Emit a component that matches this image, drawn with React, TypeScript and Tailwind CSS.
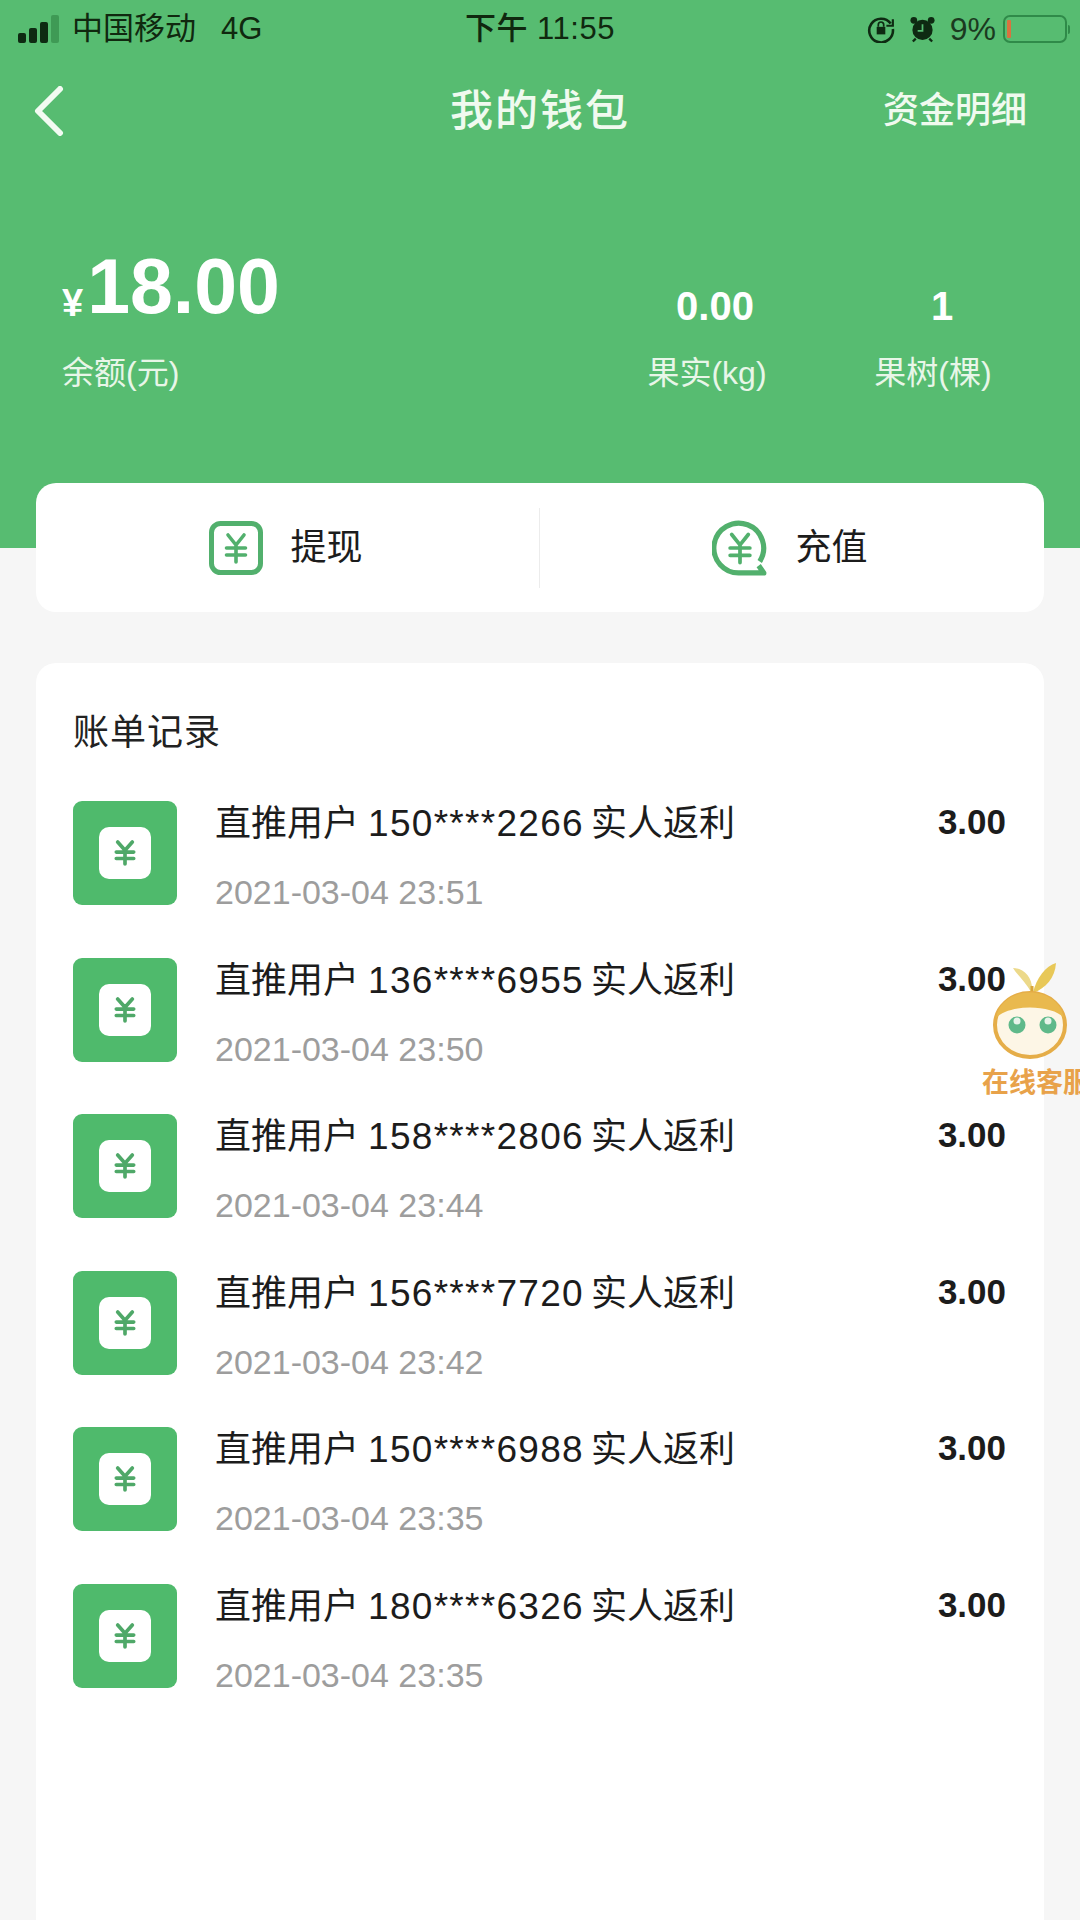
import React from "react";

const font = { fontFamily: '"Liberation Sans","Noto Sans CJK SC",sans-serif' };

function Yen({ className, sw = 4 }: { className?: string; sw?: number }) {
  return (
    <svg viewBox="0 0 24 30" className={className} fill="none" stroke="currentColor" strokeWidth={sw} strokeLinecap="round" strokeLinejoin="round">
      <path d="M4 3 L12 12 L20 3 M12 12 V27 M2.5 14 H21.5 M2.5 21 H21.5" />
    </svg>
  );
}

const rows = [
  ["150****2266", "2021-03-04 23:51"],
  ["136****6955", "2021-03-04 23:50"],
  ["158****2806", "2021-03-04 23:44"],
  ["156****7720", "2021-03-04 23:42"],
  ["150****6988", "2021-03-04 23:35"],
  ["180****6326", "2021-03-04 23:35"],
];

function Row({ phone, date }: { phone: string; date: string }) {
  return (
    <div className="flex h-[156.6px] items-start">
      <div className="flex h-[104px] w-[104px] shrink-0 items-center justify-center rounded-[9px] bg-[#4fba6c]">
        <div className="flex h-[52px] w-[52px] items-center justify-center rounded-[10px] bg-white">
          <Yen className="h-[28px] w-[22px] text-[#4fa868]" />
        </div>
      </div>
      <div className="ml-[38px] flex-1">
        <div className="whitespace-nowrap text-[36px] leading-[46px] text-[#1c1c1c]">
          直推用户 <span className="-ml-[1px] -mr-[3px] text-[37px] tracking-[1.3px]">{phone}</span> 实人返利
        </div>
        <div className="mt-[24px] whitespace-nowrap text-[34px] leading-[42px] text-[#9d9d9d]">{date}</div>
      </div>
      <div className="mr-[38px] text-[35px] font-bold leading-[42px] text-[#1c1c1c]">3.00</div>
    </div>
  );
}

function Mascot() {
  return (
    <div className="absolute left-[980px] top-[960px] w-[100px] overflow-hidden">
      <svg viewBox="0 0 100 100" className="block h-[100px] w-[100px]">
        <path d="M52 34 C46 22 38 16 33 8 C44 8 54 18 52 34Z" fill="#ecd98a" />
        <path d="M53 33 C56 18 66 6 76 3 C75 18 66 28 53 33Z" fill="#e8c858" />
        <path d="M52 26 V36" stroke="#d9a63a" strokeWidth="3" />
        <ellipse cx="50" cy="65" rx="35" ry="32" fill="#fdf6e6" stroke="#e5ad48" strokeWidth="4" />
        <path d="M16 58 C22 24 78 24 84 58 C72 44 28 44 16 58Z" fill="#e9b94e" />
        <circle cx="37" cy="65" r="8.5" fill="#5fb98a" />
        <circle cx="68" cy="65" r="8.5" fill="#5fb98a" />
        <circle cx="37" cy="61" r="3.5" fill="#e8f3ea" />
        <circle cx="68" cy="61" r="3.5" fill="#e8f3ea" />
      </svg>
      <div className="ml-[2px] mt-[7px] whitespace-nowrap text-[27px] font-bold leading-[32px] text-[#e8a24a]">在线客服</div>
    </div>
  );
}

export default function App() {
  return (
    <div className="relative h-[1920px] w-[1080px] overflow-hidden bg-[#f6f6f6]" style={font}>
      <header className="h-[548px] bg-[#57bc71] text-white">
        <div className="relative flex h-[56px] items-center pl-[18px] pr-[10px] pt-[2px] text-[#10280f]">
          <div className="flex h-[28px] items-end gap-[3px]">
            <span className="h-[10px] w-[8px] rounded-[2px] bg-[#0e2a12]" />
            <span className="h-[15px] w-[8px] rounded-[2px] bg-[#0e2a12]" />
            <span className="h-[21px] w-[8px] rounded-[2px] bg-[#0e2a12]" />
            <span className="h-[28px] w-[8px] rounded-[2px] bg-[#3f9a55]" />
          </div>
          <span className="ml-[13px] text-[31px]">中国移动</span>
          <span className="ml-[25px] text-[31px]">4G</span>
          <span className="absolute left-[465px] text-[31px] font-medium tracking-[0.5px]">下午 11:55</span>
          <div className="ml-auto flex items-center">
            <svg viewBox="0 0 26 26" className="mr-[14px] h-[28px] w-[28px]" fill="none" stroke="#0e2a12" strokeWidth="2.4">
              <path d="M22 8 A11 11 0 1 0 24 13" />
              <path d="M24 4 V10 H18" strokeWidth="2" />
              <rect x="9" y="11" width="8" height="7" fill="#0e2a12" stroke="none" />
              <path d="M10.5 11 V9 a2.5 2.5 0 0 1 5 0 V11" strokeWidth="1.6" />
            </svg>
            <svg viewBox="0 0 28 28" className="mr-[14px] h-[28px] w-[27px]">
              <circle cx="14" cy="15" r="10.5" fill="#0e2a12" />
              <circle cx="5" cy="5" r="3.5" fill="#0e2a12" />
              <circle cx="23" cy="5" r="3.5" fill="#0e2a12" />
              <path d="M14 9 V16 H9" stroke="#57bc71" strokeWidth="1.8" fill="none" />
              <path d="M7 24 L4 27 M21 24 L24 27" stroke="#0e2a12" strokeWidth="2.4" />
            </svg>
            <span className="text-[32px] text-[#1b3a1f]">9%</span>
            <div className="ml-[7px] flex h-[28px] w-[64px] items-center rounded-[7px] border-[2.5px] border-[#2f8a49] px-[2px]">
              <span className="h-[18px] w-[4px] rounded-[1px] bg-[#d9723f]" />
            </div>
            <span className="ml-[1px] h-[9px] w-[2px] rounded-r bg-[#2f8a49]" />
          </div>
        </div>

        <div className="relative flex h-[110px] items-center justify-center">
          <svg viewBox="0 0 32 50" className="absolute left-[33px] top-[30px] h-[50px] w-[32px]" fill="none" stroke="#f2fbf2" strokeWidth="6" strokeLinecap="round" strokeLinejoin="round">
            <path d="M27 3 L5 25 L27 47" />
          </svg>
          <span className="text-[43px] font-medium tracking-[2px] text-[#f0faef]">我的钱包</span>
          <span className="absolute left-[883px] text-[36px] font-medium text-[#f0faef]">资金明细</span>
        </div>

        <div className="flex pl-[62px] pr-[57px] pt-[78px]">
          <div className="flex-1">
            <div className="flex h-[84px] items-end leading-none">
              <span className="mb-[6px] text-[38px] font-bold">¥</span>
              <span className="ml-[4px] mt-[4px] text-[77px] font-bold leading-[84px]">18.00</span>
            </div>
            <div className="mt-[25px] text-[32px] leading-[40px] text-[#e8f6e8]">余额(元)</div>
          </div>
          <div className="mr-[46px] w-[180px] pt-[34px] text-center">
            <div className="ml-[16px] text-[40px] font-bold leading-[56px]">0.00</div>
            <div className="mt-[19px] whitespace-nowrap text-[32px] leading-[40px] text-[#e8f6e8]">果实(kg)</div>
          </div>
          <div className="w-[180px] pt-[34px] text-center">
            <div className="ml-[18px] text-[40px] font-bold leading-[56px]">1</div>
            <div className="mt-[19px] whitespace-nowrap text-[32px] leading-[40px] text-[#e8f6e8]">果树(棵)</div>
          </div>
        </div>
      </header>

      <section className="relative mx-[36px] -mt-[65px] flex h-[129px] items-center rounded-[20px] bg-white">
        <div className="flex flex-1 items-center justify-center pr-[3px]">
          <svg viewBox="0 0 54 54" className="h-[54px] w-[54px] text-[#52b06d]" fill="none">
            <rect x="2.5" y="2.5" width="49" height="49" rx="9" stroke="currentColor" strokeWidth="5" />
            <g transform="translate(16 12)">
              <path d="M3 2 L11 12 L19 2 M11 12 V29 M1.5 15 H20.5 M1.5 22 H20.5" stroke="currentColor" strokeWidth="3.6" strokeLinecap="round" strokeLinejoin="round" />
            </g>
          </svg>
          <span className="ml-[27px] text-[36px] text-[#1c1c1c]">提现</span>
        </div>
        <div className="h-[80px] w-px bg-[#ececec]" />
        <div className="flex flex-1 items-center justify-center pr-[4px]">
          <svg viewBox="0 0 54 54" className="h-[56px] w-[56px] text-[#52b06d]" fill="none">
            <path d="M46 40 A24 24 0 1 0 27 51 H50 L45 44" stroke="currentColor" strokeWidth="5" strokeLinejoin="round" />
            <g transform="translate(16 12)">
              <path d="M3 2 L11 12 L19 2 M11 12 V29 M1.5 15 H20.5 M1.5 22 H20.5" stroke="currentColor" strokeWidth="3.6" strokeLinecap="round" strokeLinejoin="round" />
            </g>
          </svg>
          <span className="ml-[27px] text-[36px] text-[#1c1c1c]">充值</span>
        </div>
      </section>

      <section className="mx-[36px] mt-[51px] h-[1300px] rounded-[20px] bg-white pl-[37px] pt-[48px]">
        <h2 className="text-[36px] font-normal leading-[44px] tracking-[1px] text-[#222]">账单记录</h2>
        <div className="mt-[46px]">
          {rows.map(([p, d], i) => (
            <Row key={i} phone={p} date={d} />
          ))}
        </div>
      </section>

      <Mascot />
    </div>
  );
}
